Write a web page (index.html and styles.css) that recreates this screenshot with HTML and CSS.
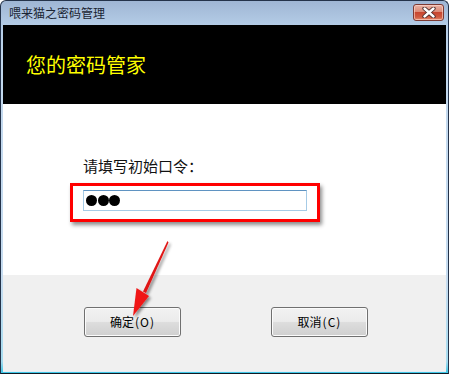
FILE: index.html
```html
<!DOCTYPE html>
<html lang="zh-CN">
<head>
<meta charset="utf-8">
<title>喂来猫之密码管理</title>
<link rel="stylesheet" href="styles.css">
</head>
<body>
<div class="window">
  <div class="titlebar">
    <span class="title">喂来猫之密码管理</span>
    <div class="close-btn">
      <svg width="16" height="11" viewBox="0 0 16 11">
        <path d="M3.5 1.5 L12.5 9.5 M12.5 1.5 L3.5 9.5" stroke="#4a2a28" stroke-width="4.2" stroke-linecap="round"/>
        <path d="M3.5 1.5 L12.5 9.5 M12.5 1.5 L3.5 9.5" stroke="#ffffff" stroke-width="2.4" stroke-linecap="round"/>
      </svg>
    </div>
  </div>
  <div class="client">
    <div class="banner"><span class="banner-text">您的密码管家</span></div>
    <div class="form-area">
      <div class="label">请填写初始口令：</div>
      <div class="highlight">
        <div class="textbox">
          <span class="dot"></span><span class="dot"></span><span class="dot"></span>
        </div>
      </div>
    </div>
    <div class="button-area">
      <div class="btn">确定<span class="key">(O)</span></div>
      <div class="btn">取消<span class="key">(C)</span></div>
    </div>
    <svg class="arrow" width="443" height="346" viewBox="0 0 443 346">
      <defs>
        <filter id="sh" x="-50%" y="-50%" width="200%" height="200%">
          <feDropShadow dx="2" dy="2" stdDeviation="1.5" flood-color="#000" flood-opacity="0.45"/>
        </filter>
      </defs>
      <g filter="url(#sh)">
        <path d="M164.5 216 L165.5 217.5 L143 268 L140 266.5 Z" fill="#e01414"/>
        <path d="M133.5 263 L146 271 L130 291 Z" fill="#f01818"/>
      </g>
    </svg>
  </div>
</div>
</body>
</html>
```

FILE: styles.css
```css
html, body {
  margin: 0;
  padding: 0;
  background: #ffffff;
}

body {
  width: 449px;
  height: 374px;
  overflow: hidden;
  font-family: "Noto Sans CJK SC", "Noto Sans", sans-serif;
}

.window {
  box-sizing: border-box;
  width: 449px;
  height: 374px;
  border: 1px solid #24334a;
  border-bottom-color: #0f1a24;
  border-radius: 6px 6px 0 0;
  background: linear-gradient(to bottom, #9fb6d4 0, #b4cce6 24px, #c2d8ee 60px, #c6dcf0 75%, #a6dcf0 97%, #3cc6e6 100%);
  padding: 0 2px 2px 2px;
  display: flex;
  flex-direction: column;
}

.titlebar {
  height: 24px;
  display: flex;
  align-items: center;
  justify-content: space-between;
  padding-left: 6px;
  padding-right: 2px;
}

.title {
  font-size: 12px;
  color: #1a2433;
  line-height: 16px;
}

.close-btn {
  box-sizing: border-box;
  width: 31px;
  height: 17px;
  margin-top: -2px;
  border: 1px solid #7d3a33;
  border-radius: 3px;
  background: linear-gradient(to bottom, #eab3a6 0, #dc8a76 45%, #c8462f 50%, #cf5a40 80%, #e48a6c 100%);
  box-shadow: inset 0 0 0 1px rgba(255, 220, 210, 0.6);
  display: flex;
  align-items: center;
  justify-content: center;
}

.client {
  position: relative;
  flex: 1;
  display: flex;
  flex-direction: column;
  background: #f0f0f0;
  box-shadow: 0 1px 0 #e4ecf4;
}

.banner {
  height: 79px;
  background: #000000;
  display: flex;
  align-items: center;
  padding-left: 23px;
}

.banner-text {
  font-size: 20px;
  color: #ffff00;
  line-height: 24px;
}

.form-area {
  height: 171px;
  box-sizing: border-box;
  background: #ffffff;
  padding: 52px 0 0 67px;
}

.label {
  margin-left: 13px;
  font-size: 15px;
  line-height: 20px;
  color: #111111;
}

.highlight {
  margin-top: 7px;
  box-sizing: border-box;
  width: 250px;
  height: 39px;
  border: 3px solid #ff0000;
  padding: 4px 10px 8px 10px;
  box-shadow: 2px 3px 4px rgba(0, 0, 0, 0.45);
  background: #ffffff;
}

.textbox {
  box-sizing: border-box;
  width: 224px;
  height: 21px;
  border: 1px solid #a6cbe6;
  border-top-color: #5f93c2;
  background: #ffffff;
  display: flex;
  align-items: center;
  padding-left: 2px;
}

.dot {
  width: 11px;
  height: 11px;
  border-radius: 50%;
  background: #000000;
  margin-right: 0.5px;
}

.button-area {
  flex: 1;
  background: #f0f0f0;
  display: flex;
  padding: 32px 0 0 81px;
  gap: 90px;
}

.btn {
  box-sizing: border-box;
  width: 97px;
  height: 30px;
  border: 1px solid #707070;
  border-radius: 3px;
  background: linear-gradient(to bottom, #f2f2f2 0, #ebebeb 48%, #dddddd 52%, #cfcfcf 100%);
  box-shadow: inset 0 0 0 1px #fbfbfb;
  display: flex;
  align-items: center;
  justify-content: center;
  font-size: 12px;
  color: #000000;
  line-height: 16px;
}

.key {
  margin-left: 1px;
  letter-spacing: 1px;
}

.arrow {
  position: absolute;
  left: 0;
  top: 0;
  pointer-events: none;
}
```
